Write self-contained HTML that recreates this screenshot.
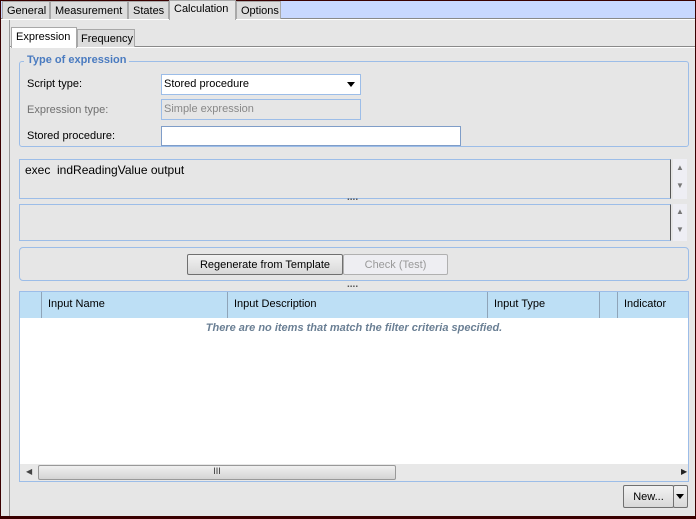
<!DOCTYPE html>
<html><head><style>
*{margin:0;padding:0;box-sizing:border-box}
body{width:696px;height:519px;background:#e6e6e6;font-family:"Liberation Sans",sans-serif;font-size:11px;color:#000;position:relative;overflow:hidden}
.a{position:absolute}
.tab{position:absolute;top:1px;height:18px;background:#dcdcdc;border:1px solid #a8a8a8;border-bottom:none;padding:3px 0 0 4px;font-size:11px}
.btn{position:absolute;border:1px solid #707070;border-radius:2px;background:linear-gradient(#f2f2f2,#d8d8d8);text-align:center;font-size:11px}
.lbl{position:absolute;left:27px;font-size:11px}
.col{position:absolute;top:0;height:26px;border-left:1px solid #8fa4b8;padding:6px 0 0 6px}
.dots{position:absolute;left:347px;font-size:10px;font-weight:bold;color:#555;letter-spacing:0}
.sb{position:absolute;width:14px;background:#eeeef4;color:#777;font-size:8px;text-align:center}
</style></head><body>
<div class="a" style="left:0;top:0;width:696px;height:519px;border:1px solid #3a0000"></div>
<div class="a" style="left:1px;top:1px;width:694px;height:18px;background:#c8d8ff"></div>
<div class="a" style="left:1px;top:18px;width:694px;height:1px;background:#8a8a8a"></div>
<div class="a" style="left:1px;top:19px;width:694px;height:1px;background:#fff"></div>
<div class="tab" style="left:2px;width:48px">General</div>
<div class="tab" style="left:50px;width:78px">Measurement</div>
<div class="tab" style="left:128px;width:41px">States</div>
<div class="tab" style="left:169px;top:0;height:20px;width:67px;background:#e6e6e6;padding-top:2px">Calculation</div>
<div class="tab" style="left:236px;width:45px">Options</div>
<div class="a" style="left:9px;top:20px;width:1px;height:498px;background:#9a9a9a"></div>
<div class="a" style="left:1px;top:516px;width:694px;height:2px;background:#3a0000"></div>
<div class="a" style="left:10px;top:46px;width:685px;height:1px;background:#8a8a8a"></div>
<div class="a" style="left:10px;top:47px;width:685px;height:1px;background:#fff"></div>
<div class="tab" style="left:77px;top:29px;height:18px;width:58px;padding-left:3px">Frequency</div>
<div class="tab" style="left:11px;top:27px;height:21px;width:66px;background:#fff;padding-top:3px">Expression</div>
<div class="a" style="left:12px;top:48px;width:683px;height:468px;background:#e6e6e6"></div>

<div class="a" style="left:19px;top:61px;width:670px;height:86px;border:1px solid #9cbde8;border-radius:3px"></div>
<div class="a" style="left:24px;top:54px;padding:0 3px;background:#e6e6e6;color:#4a7bc0;font-weight:bold;font-size:11px">Type of expression</div>
<div class="lbl" style="top:78px">Script type:</div>
<div class="lbl" style="top:104px;color:#707070">Expression type:</div>
<div class="lbl" style="top:130px">Stored procedure:</div>
<div class="a" style="left:161px;top:74px;width:200px;height:21px;background:#fff;border:1px solid #9cbde8;padding:3px 0 0 2px">Stored procedure</div>
<svg class="a" style="left:347px;top:82px" width="9" height="6"><path d="M0 0H8L4 5Z" fill="#000"/></svg>
<div class="a" style="left:161px;top:99px;width:200px;height:21px;border:1px solid #9cbde8;padding:3px 0 0 2px;color:#888">Simple expression</div>
<div class="a" style="left:161px;top:126px;width:300px;height:20px;background:#fff;border:1px solid #7f9dc8"></div>

<div class="a" style="left:19px;top:159px;width:652px;height:40px;border:1px solid #9cbde8;border-right:1px solid #555;padding:3px 0 0 5px;font-size:12px">exec&nbsp; indReadingValue output</div>
<div class="sb" style="left:673px;top:159px;height:40px;padding-top:4px">▲<br><br>▼</div>
<div class="dots" style="top:192px">....</div>
<div class="a" style="left:19px;top:204px;width:652px;height:37px;border:1px solid #9cbde8;border-right:1px solid #555"></div>
<div class="sb" style="left:673px;top:204px;height:37px;padding-top:3px">▲<br><br>▼</div>
<div class="a" style="left:19px;top:247px;width:670px;height:34px;border:1px solid #9cbde8;border-radius:4px"></div>
<div class="btn" style="left:187px;top:254px;width:156px;height:21px;padding-top:4px">Regenerate from Template</div>
<div class="btn" style="left:343px;top:254px;width:105px;height:21px;padding-top:4px;border-color:#b0b0b0;background:#eeeef2;color:#999">Check (Test)</div>
<div class="dots" style="top:279px">....</div>

<div class="a" style="left:19px;top:291px;width:670px;height:191px;border:1px solid #9cbde8;background:#fff">
<div class="a" style="left:0;top:0;width:668px;height:26px;background:#bddff5">
<div class="col" style="left:21px;width:186px">Input Name</div>
<div class="col" style="left:207px;width:260px">Input Description</div>
<div class="col" style="left:467px;width:112px">Input Type</div>
<div class="col" style="left:579px;width:18px"></div>
<div class="col" style="left:597px;width:71px">Indicator</div>
</div>
<div class="a" style="left:0;top:30px;width:668px;text-align:center;color:#6a7f94;font-style:italic;font-weight:bold">There are no items that match the filter criteria specified.</div>
<div class="a" style="left:0;top:172px;width:668px;height:17px;background:#e8e8e8"></div>
<div class="a" style="left:6px;top:175px;font-size:8px;color:#444">◀</div>
<div class="a" style="left:661px;top:175px;font-size:8px;color:#222">▶</div>
<div class="a" style="left:18px;top:173px;width:358px;height:15px;border:1px solid #999;border-radius:2px;background:linear-gradient(#f0f0f0,#d4d4d4);text-align:center;font-size:9px;color:#333">III</div>
</div>

<div class="btn" style="left:623px;top:485px;width:51px;height:23px;padding-top:5px">New...</div>
<div class="btn" style="left:673px;top:485px;width:15px;height:23px"></div>
<svg class="a" style="left:676px;top:494px" width="9" height="6"><path d="M0 0H8L4 5Z" fill="#000"/></svg>
</body></html>
